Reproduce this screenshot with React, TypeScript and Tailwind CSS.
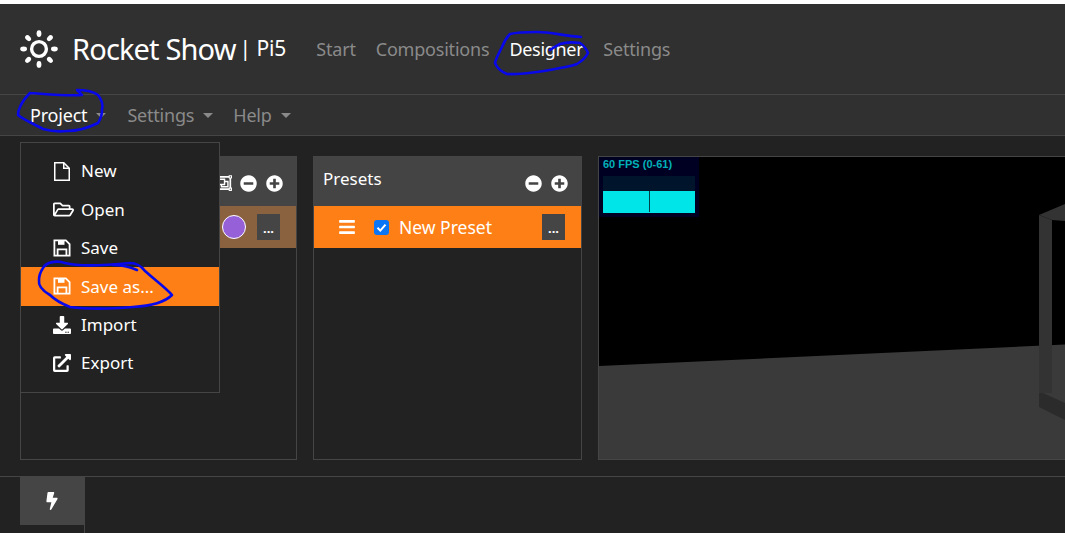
import React from "react";
import {
  FaRegFolderOpen,
  FaDownload,
  FaExternalLinkAlt,
  FaBolt,
  FaBars,
  FaMinusCircle,
  FaPlusCircle,
  FaRegObjectGroup,
} from "react-icons/fa";

function Logo() {
  const rays = [0, 45, 90, 135, 180, 225, 270, 315];
  return (
    <svg width="38" height="38" viewBox="0 0 38 38" className="shrink-0">
      <circle cx="19" cy="19" r="7.4" fill="none" stroke="#fff" strokeWidth="3.4" />
      {rays.map((r) => (
        <ellipse key={r} cx="19" cy="3.6" rx="2.4" ry="3.4" fill="#fff" transform={`rotate(${r} 19 19)`} />
      ))}
    </svg>
  );
}

function FileIcon() {
  return (
    <svg width="18" height="19" viewBox="0 0 18 19" fill="none" stroke="#fff" strokeWidth="1.5">
      <path d="M1.75 .75h9l5.5 5.5v12H1.75z" />
      <path d="M10.75 .75v5.5h5.5" />
    </svg>
  );
}

function SaveIcon() {
  return (
    <svg width="18" height="18" viewBox="0 0 18 18" fill="none" stroke="#fff" strokeWidth="1.8">
      <path d="M1.4 1.4h11.4l3.8 3.8v11.4H1.4z" />
      <path d="M4.6 16.4v-6h8.8v6" />
      <path d="M5 1.8h6.5v4H5z" fill="#fff" stroke="none" />
    </svg>
  );
}

function Caret({ color }: { color: string }) {
  return (
    <svg width="10" height="5" viewBox="0 0 10 5" className="ml-[9px]">
      <path d="M0 0h10L5 5z" fill={color} />
    </svg>
  );
}

function MenuItem({ icon, label, active }: { icon: React.ReactNode; label: string; active?: boolean }) {
  return (
    <div className={`flex items-center h-[38.4px] pl-[32px] text-[17px] text-white ${active ? "bg-[#fd7f16]" : ""}`}>
      <span className="w-[28px] flex items-center">{icon}</span>
      <span>{label}</span>
    </div>
  );
}

function Dots() {
  return (
    <div className="w-[23px] h-[26px] bg-[#454545] text-white text-[13px] font-bold flex items-center justify-center pt-[3px]">
      ...
    </div>
  );
}

function PanelHead({ title, extra }: { title?: string; extra?: boolean }) {
  return (
    <div className="h-[49px] bg-[#444444] flex items-center justify-between pl-[9px] pr-[13px] text-white text-[17px]">
      <span className="-mt-[5px]">{title}</span>
      <span className="flex items-center gap-[9px] mt-[3px]">
        {extra && <span className="-mr-[1px]"><FaRegObjectGroup size={18} /></span>}
        <FaMinusCircle size={17} />
        <FaPlusCircle size={17} />
      </span>
    </div>
  );
}

export default function App() {
  return (
    <div
      className="relative w-[1065px] h-[533px] overflow-hidden bg-[#222222] text-white"
      style={{ fontFamily: '"Noto Sans", sans-serif' }}
    >
      <div className="h-[4px] bg-white" />
      <header className="h-[91px] bg-[#303030] border-b border-[#454545] flex items-center pl-[20px] pb-[1px]">
        <Logo />
        <span className="ml-[14px] text-[29px] tracking-[-0.85px] leading-none">Rocket Show</span>
        <span className="ml-[4px] text-[21px] leading-none tracking-[-0.1px]">| Pi5</span>
        <nav className="flex items-center ml-[30px] mt-[1px] gap-[20px] text-[18px] text-[#8a8a8a] tracking-[-0.2px]">
          <span>Start</span>
          <span>Compositions</span>
          <span className="text-white tracking-[-0.3px]">Designer</span>
          <span>Settings</span>
        </nav>
      </header>
      <div className="h-[41px] bg-[#303030] border-b border-[#454545] flex items-center pl-[30px] gap-[20px] text-[18px] text-[#8a8a8a] tracking-[-0.2px]">
        <span className="flex items-center text-white mr-[1px]">Project<Caret color="#8a8a8a" /></span>
        <span className="flex items-center">Settings<Caret color="#8a8a8a" /></span>
        <span className="flex items-center">Help<Caret color="#8a8a8a" /></span>
      </div>

      <main className="flex gap-[16px] pl-[20px] pt-[20px] h-[341px] border-b border-[#454545]">
        <section className="w-[277px] h-[304px] border border-[#454545] shrink-0">
          <PanelHead extra />
          <div className="h-[42px] bg-[#8a6240] flex items-center justify-end gap-[11px] pr-[16px]">
            <span className="w-[24px] h-[24px] rounded-full bg-[#9560d8] border border-white" />
            <Dots />
          </div>
        </section>
        <section className="w-[269px] h-[304px] border border-[#454545] shrink-0">
          <PanelHead title="Presets" />
          <div className="h-[42px] bg-[#fd7f16] flex items-center pl-[24px] pr-[16px] text-[17.5px]">
            <FaBars size={18} />
            <span className="ml-[18px] w-[15px] h-[15px] rounded-[3px] bg-[#0a76f6] flex items-center justify-center">
              <svg width="11" height="11" viewBox="0 0 11 11"><path d="M1.5 5.8 4.3 8.6 9.5 2.6" fill="none" stroke="#fff" strokeWidth="2" /></svg>
            </span>
            <span className="ml-[10px] flex-1">New Preset</span>
            <Dots />
          </div>
        </section>
        <section className="relative w-[480px] h-[304px] shrink-0 border border-[#454545] bg-black overflow-hidden">
          <svg width="478" height="302" viewBox="0 0 478 302" className="block">
            <polygon points="0,209 478,187 478,302 0,302" fill="#3a3a3a" />
            <polygon points="440,58 466,47 466,64 453,63" fill="#333333" />
            <polygon points="440,58 453,63 453,236 444,236 440,250" fill="#333333" />
            <polygon points="440,236 444,236 466,246 466,263 440,250" fill="#2b2b2b" />
          </svg>
          <div className="absolute left-0 top-0 w-[100px] h-[60px] bg-[#000022]">
            <div className="text-[11px] font-bold leading-none text-[#00b0b8] pl-[4px] pt-[2px] font-['Liberation_Sans',sans-serif]">60 FPS (0-61)</div>
            <div className="ml-[4px] mt-[6px] w-[92px] h-[37px] bg-[#00152b] flex items-end">
              <div className="w-full h-[22px] bg-[#00e5e8] relative">
                <span className="absolute left-[46px] top-0 h-[21px] w-px bg-[#00404a]" />
              </div>
            </div>
          </div>
        </section>
      </main>

      <div className="flex pl-[20px]">
        <div className="w-[65px] h-[48px] bg-[#454545] flex items-center justify-center shrink-0 pr-[2px]">
          <FaBolt size={18} />
        </div>
        <div className="w-px h-[57px] bg-[#454545] -ml-px" />
      </div>

      <div className="absolute left-[20px] top-[142px] w-[200px] h-[251px] bg-[#222222] border border-[#454545] pt-[9px]">
        <MenuItem icon={<FileIcon />} label="New" />
        <MenuItem icon={<FaRegFolderOpen size={21} />} label="Open" />
        <MenuItem icon={<SaveIcon />} label="Save" />
        <MenuItem icon={<SaveIcon />} label="Save as..." active />
        <MenuItem icon={<FaDownload size={18} />} label="Import" />
        <MenuItem icon={<FaExternalLinkAlt size={18} />} label="Export" />
      </div>

      <svg className="absolute left-0 top-0 pointer-events-none" width="1065" height="533" viewBox="0 0 1065 533" fill="none" stroke="#0808ea" strokeWidth="2.6" strokeLinecap="round" strokeLinejoin="round">
        <path d="M30 93C46 94 66 96 82 95C80 93 78 91 77 90C86 90 94 92 98 95C102 100 103 106 102 110C102 116 100 120 98 123C88 128 78 131 67 131C58 132 50 131 43 129C34 124 24 120 18 115C18 112 19 109 20 107C22 102 26 97 30 93" />
        <path d="M581 37C565 36 550 32 537 32C527 32 518 32 510 34C506 38 504 42 502 47C499 53 496 58 495 63C497 68 502 72 507 74C525 75 545 71 560 68C566 67 572 66 577 64C582 61 586 57 588 53C586 48 583 45 580 43C573 42 566 42 560 44C556 46 553 48 550 50" />
        <path d="M43 268C46 262 57 260 65 263C80 267 110 265 130 263C138 263 142 267 145 271C155 280 166 288 172 295C165 302 150 306 133 307C110 309 85 309 70 307C60 303 53 298 50 295C43 291 38 286 39 280C39 275 41 271 43 268" />
        <path d="M113 265C122 265 130 267 137 270" />
      </svg>
    </div>
  );
}
